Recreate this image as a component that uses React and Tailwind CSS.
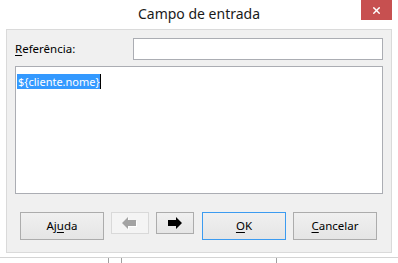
import { X } from 'lucide-react';

function ArrowLeft({ disabled }) {
  return (
    <svg width="16" height="14" viewBox="0 0 16 14" className="block">
      {disabled && <path d="M1 8 L7 2 L7 5 L15 5 L15 11 L7 11 L7 14 Z" fill="#ffffff" />}
      <path d="M0 7 L6 1 L6 4 L14 4 L14 10 L6 10 L6 13 Z" fill={disabled ? '#a3a3a3' : '#000000'} />
    </svg>
  );
}

function ArrowRight() {
  return (
    <svg width="16" height="14" viewBox="0 0 16 14" className="block">
      <path d="M15 7 L9 1 L9 4 L1 4 L1 10 L9 10 L9 13 Z" fill="#000000" />
    </svg>
  );
}

function DialogButton({ children, primary }) {
  return (
    <button
      className={
        primary
          ? 'flex items-center justify-center w-[84px] h-[28px] border border-[#3c9bf0] bg-gradient-to-b from-[#f0f0f0] to-[#e5e5e5] text-[11.5px] text-black'
          : 'flex items-center justify-center w-[84px] h-[28px] border border-[#acacac] bg-gradient-to-b from-[#f0f0f0] to-[#e5e5e5] text-[11.5px] text-black'
      }
    >
      {children}
    </button>
  );
}

export default function App() {
  return (
    <div
      className="relative w-[398px] h-[263px] bg-white overflow-hidden"
      style={{ fontFamily: '"Noto Sans", "Open Sans", sans-serif' }}
    >
      <div className="relative flex items-center justify-center h-[29px]">
        <span className="text-[14px] text-[#1a1a1a] leading-none pb-[1px]">Campo de entrada</span>
        <button className="absolute top-0 right-[6px] w-[31px] h-[20px] bg-[#c75050] flex items-center justify-center">
          <X className="w-[11px] h-[11px] text-white" strokeWidth={3} />
        </button>
      </div>

      <div className="mx-[6px] h-[224px] bg-[#f0f0f0] border border-[#dadada] px-[8px] pt-[8px]">
        <div className="flex items-center justify-between h-[22px]">
          <span className="text-[11.5px] text-black">
            <span className="underline underline-offset-2">R</span>eferência:
          </span>
          <div className="w-[250px] h-[22px] bg-white border border-[#abadb3]"></div>
        </div>

        <div className="mt-[6px] h-[128px] bg-white border border-[#abadb3] p-[1px]">
          <span className="inline-block bg-[#3399ff] text-white text-[11px] leading-[15px] pl-[1px] border-r border-black">
            {'${cliente.nome}'}
          </span>
        </div>

        <div className="flex items-start mt-[18px] pl-[5px]">
          <DialogButton>
            <span>
              Aj<span className="underline underline-offset-2">u</span>da
            </span>
          </DialogButton>
          <button className="ml-[7px] w-[38px] h-[22px] border border-[#d9d9d9] bg-[#f4f4f4] flex items-center justify-center">
            <ArrowLeft disabled />
          </button>
          <button className="ml-[7px] w-[38px] h-[22px] border border-[#acacac] bg-gradient-to-b from-[#f0f0f0] to-[#e5e5e5] flex items-center justify-center">
            <ArrowRight />
          </button>
          <div className="ml-[8px]">
            <DialogButton primary>
              <span className="underline underline-offset-2">O</span>K
            </DialogButton>
          </div>
          <div className="ml-[7px]">
            <DialogButton>
              <span>
                <span className="underline underline-offset-2">C</span>ancelar
              </span>
            </DialogButton>
          </div>
        </div>
      </div>

      <div className="relative mt-[4px] h-[6px] border-t border-[#d4d4d4]">
        <div className="absolute left-[108px] top-0 w-px h-[5px] bg-[#a0a0a0]"></div>
        <div className="absolute left-[121px] top-0 w-px h-[5px] bg-[#a0a0a0]"></div>
        <div className="absolute left-[276px] top-0 w-px h-[5px] bg-[#a0a0a0]"></div>
      </div>
    </div>
  );
}
